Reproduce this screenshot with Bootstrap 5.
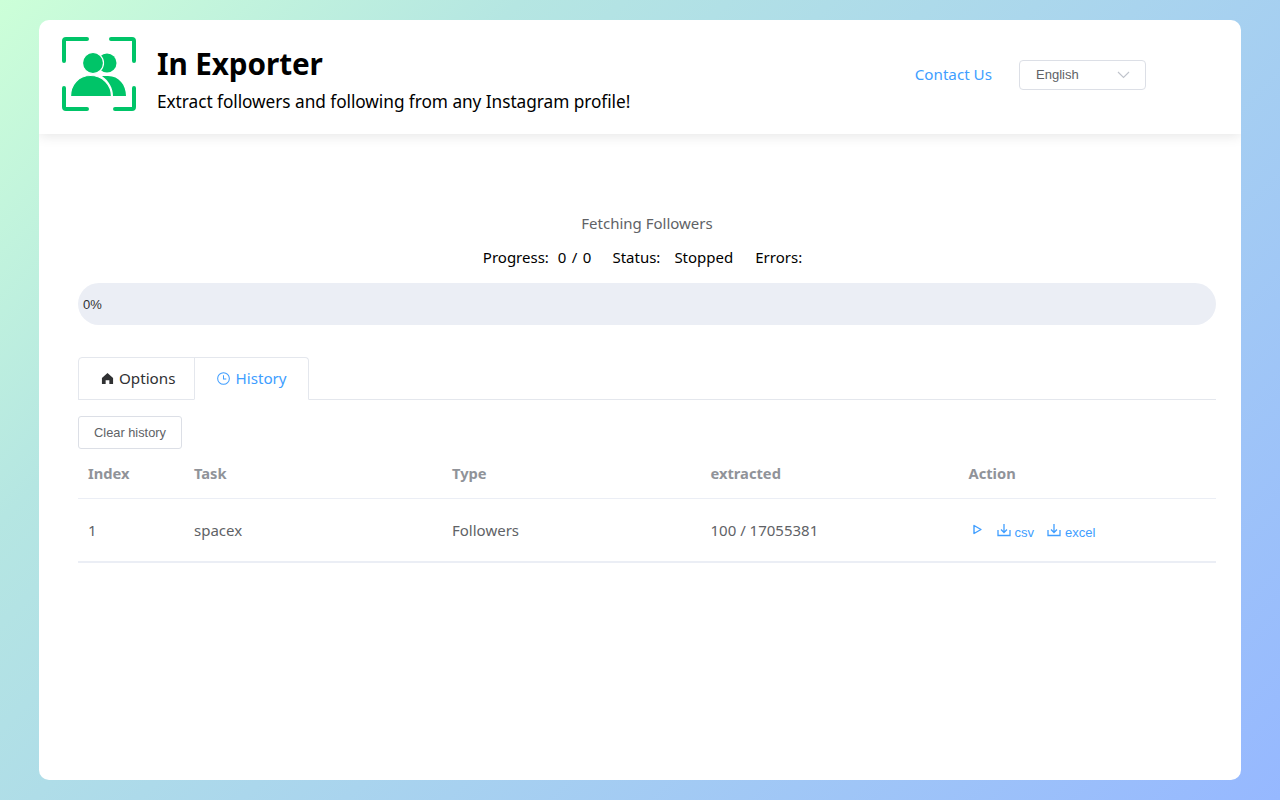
<!DOCTYPE html>
<html lang="en">
<head>
<meta charset="utf-8">
<title>In Exporter</title>
<link href="https://cdn.jsdelivr.net/npm/bootstrap@5.3.0/dist/css/bootstrap.min.css" rel="stylesheet">
<style>
html,body{height:100%}
body{margin:0;background:linear-gradient(135deg,#ccffd8 0%,#b5e6e2 25%,#a9d4ee 55%,#96b8ff 100%);font-family:"Noto Sans","Liberation Sans",sans-serif;color:#000;overflow:hidden}
.app-shell{width:1202px;height:760px;margin:0 39px;position:relative;top:20px;background:#fff;border-radius:10px;overflow:hidden}
.app-head{height:114px;box-shadow:0 2px 12px rgba(0,0,0,.1);padding:0 95px 0 21px}
.head-logo{width:76px;height:76px;flex:none;margin-top:-6px}
.head-title{font-size:29.7px;line-height:40px;font-weight:700;margin:0;letter-spacing:-.1px}
.head-sub{font-size:17.25px;line-height:24px;margin:6px 0 0;letter-spacing:-.05px}
.head-text{margin-left:21px;padding-top:4px}
.head-tools{margin-top:-4px}
.head-link{color:#409eff;font-size:15.2px;line-height:22px;text-decoration:none;margin:-2px 27px 0 0}
.lang-box{width:127px;height:30px;border:1px solid #dcdfe6;border-radius:4px;padding:0 15px 0 16px;font-family:"Liberation Sans",sans-serif;font-size:13px;color:#606266}
.app-body{padding:77px 25px 0 39px}
.fetch-title{font-size:15px;line-height:24px;color:#606266;margin:0}
.fetch-stats{font-size:15px;line-height:24px;margin:10px 0 0;padding-right:9px}
.stat-progress{margin-right:21px}
.stat-status{margin-right:22px}
.stat-val{margin-left:9px;word-spacing:1.5px}
.stat-val-b{margin-left:14px}
.prog-track{height:42px;border-radius:21px;background:#ebeef5;margin-top:14px;font-family:"Liberation Sans",sans-serif;font-size:13px;color:#303133;padding:1px 0 0 5px}
.tab-row{margin-top:32px;height:43px;border-bottom:1px solid #e4e7ed}
.tab-item{height:43px;border:1px solid #e4e7ed;font-size:15.2px;padding:0 21px 0 22px;color:#303133;background:#fff;gap:5px;margin-right:-1px}
.tab-item:first-child{border-radius:4px 0 0 0;border-bottom-color:#e4e7ed;padding-right:19px}
.tab-item:nth-child(2){border-radius:0 4px 0 0;border-bottom-color:#fff;color:#409eff}
.clear-btn{height:33px;width:104px;margin-top:16px;border:1px solid #dcdfe6;border-radius:3px;background:#fff;font-family:"Liberation Sans",sans-serif;font-size:12.8px;color:#606266;padding:0}
.hist-grid{display:grid;grid-template-columns:106px 258px 258.5px 258px 1fr;padding-left:10px}
.hist-head{height:50px;border-bottom:1px solid #ebeef5;font-size:14.7px;font-weight:700;color:#909399;align-items:center}
.hist-row{height:64px;border-bottom:2px solid #ebeef5;font-size:15px;color:#606266;align-items:center}
.act-cell{font-family:"Liberation Sans",sans-serif;font-size:13px;color:#409eff;padding-top:6px}
.act-play{margin:-7px 14px 0 3px}
.act-item{gap:4px;margin-right:13px}
.act-item svg{margin-top:-6px}
</style>
</head>
<body>
<div class="app-shell">
  <header class="app-head d-flex align-items-center justify-content-between">
    <div class="d-flex align-items-center">
      <svg class="head-logo" viewBox="0 0 76 76" aria-hidden="true">
        <g fill="none" stroke="#00c468" stroke-width="4" stroke-linecap="round" stroke-linejoin="round">
          <path d="M4 25V5q0-2 2-2h21M51 3h21q2 0 2 2v20M4 52v19q0 2 2 2h21M55 73h17q2 0 2-2V52"/>
        </g>
        <circle cx="47" cy="27" r="9.500" fill="#00c468"/>
        <circle cx="33" cy="27" r="10.500" fill="#00c468" stroke="#fff" stroke-width="1.200"/>
        <path d="M42 40h6c11 0 18 9 18 20H53c0-8-4-15-11-20z" fill="#00c468"/>
        <path d="M10.500 60.500c0-12 8-21 20-21s21 9 21 21z" fill="#00c468" stroke="#fff" stroke-width="1.200"/>
      </svg>
      <div class="head-text">
        <h1 class="head-title">In Exporter</h1>
        <p class="head-sub">Extract followers and following from any Instagram profile!</p>
      </div>
    </div>
    <div class="head-tools d-flex align-items-center">
      <a class="head-link" href="#">Contact Us</a>
      <div class="lang-box d-flex align-items-center justify-content-between">
        <span>English</span>
        <svg width="13" height="8" viewBox="0 0 13 8" aria-hidden="true"><path d="M1 1l5.500 5.500L12 1" fill="none" stroke="#c0c4cc" stroke-width="1.100"/></svg>
      </div>
    </div>
  </header>
  <main class="app-body">
    <p class="fetch-title text-center">Fetching Followers</p>
    <div class="fetch-stats d-flex justify-content-center">
      <span class="stat-progress">Progress:<span class="stat-val">0 / 0</span></span>
      <span class="stat-status">Status:<span class="stat-val-b">Stopped</span></span>
      <span>Errors:</span>
    </div>
    <div class="prog-track d-flex align-items-center">0%</div>
    <div class="tab-row d-flex">
      <div class="tab-item d-flex align-items-center">
        <svg width="13" height="13" viewBox="0 0 14 14" aria-hidden="true"><path d="M7 1L1 6.500V13h4V9h4v4h4V6.500z" fill="#303133"/></svg>
        Options
      </div>
      <div class="tab-item d-flex align-items-center">
        <svg width="13" height="13" viewBox="0 0 14 14" aria-hidden="true"><circle cx="7" cy="7" r="6.300" fill="none" stroke="#409eff" stroke-width="1.100"/><path d="M7 3.500V7.500H10" fill="none" stroke="#409eff" stroke-width="1.100"/></svg>
        History
      </div>
    </div>
    <button class="clear-btn d-block" type="button">Clear history</button>
    <div class="hist-grid hist-head"><span>Index</span><span>Task</span><span>Type</span><span>extracted</span><span>Action</span></div>
    <div class="hist-grid hist-row">
      <span>1</span><span>spacex</span><span>Followers</span><span>100 / 17055381</span>
      <div class="act-cell d-flex align-items-center">
        <svg class="act-play" width="11" height="11" viewBox="0 0 11 11" aria-hidden="true"><path d="M2 1.500L9 5.500L2 9.500z" fill="none" stroke="#409eff" stroke-width="1.400" stroke-linejoin="round"/></svg>
        <span class="act-item d-flex align-items-center"><svg width="14" height="14" viewBox="0 0 14 14" aria-hidden="true"><path d="M1 7v5.500h12V7M7 1v8M4 6.500L7 9.500L10 6.500" fill="none" stroke="#409eff" stroke-width="1.300"/></svg>csv</span>
        <span class="act-item d-flex align-items-center"><svg width="14" height="14" viewBox="0 0 14 14" aria-hidden="true"><path d="M1 7v5.500h12V7M7 1v8M4 6.500L7 9.500L10 6.500" fill="none" stroke="#409eff" stroke-width="1.300"/></svg>excel</span>
      </div>
    </div>
  </main>
</div>
<script src="https://cdn.jsdelivr.net/npm/bootstrap@5.3.0/dist/js/bootstrap.bundle.min.js"></script>
</body>
</html>
